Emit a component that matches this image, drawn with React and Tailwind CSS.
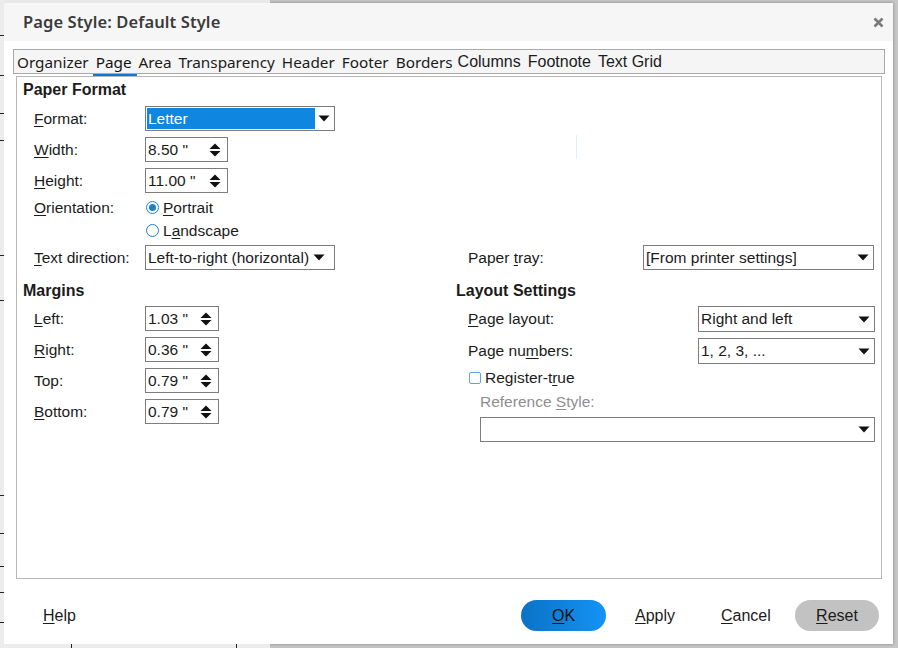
const sans = "font-['Liberation_Sans',Arial,sans-serif]"

function U({ text, at }) {
  // underline the mnemonic letter
  if (at === undefined || at < 0) return <span>{text}</span>
  return (
    <span className="whitespace-pre">
      {text.slice(0, at)}
      <span className="underline underline-offset-[2px] decoration-1">{text[at]}</span>
      {text.slice(at + 1)}
    </span>
  )
}

function DownArrow() {
  return (
    <svg width="12" height="7" viewBox="0 0 12 7" className="shrink-0">
      <path d="M0.5 0.5 L11.5 0.5 L6 6.5 Z" fill="#111" />
    </svg>
  )
}

function SpinArrows() {
  return (
    <svg width="12" height="16" viewBox="0 0 12 16" className="shrink-0">
      <path d="M0.5 7 L6 1.5 L11.5 7 Z" fill="#111" />
      <path d="M0.5 9 L11.5 9 L6 14.5 Z" fill="#111" />
    </svg>
  )
}

function Select({ value, className = '', selected = false, pr = 'pr-[4px]' }) {
  return (
    <div className={`flex items-center h-[25px] border border-[#7d7d7d] bg-white pl-[1px] ${pr} ${className}`}>
      <div className={`flex-1 h-[21px] flex items-center pl-[1px] ${selected ? 'bg-[#0f86e0] text-white mr-[3px]' : ''}`}>
        {value}
      </div>
      <DownArrow />
    </div>
  )
}

function Spin({ value, w = 'w-[83px]' }) {
  return (
    <div className={`flex items-center h-[25px] border border-[#7d7d7d] bg-white pl-[2px] pr-[6px] ${w}`}>
      <div className="flex-1">{value}</div>
      <SpinArrows />
    </div>
  )
}

function Label({ text, at, className = 'w-[111px]' }) {
  return (
    <span className={`shrink-0 ${className}`}>
      <U text={text} at={at} />
    </span>
  )
}

const margins = [
  { label: 'Left:', at: 0, value: '1.03 "' },
  { label: 'Right:', at: 0, value: '0.36 "' },
  { label: 'Top:', at: -1, value: '0.79 "' },
  { label: 'Bottom:', at: 0, value: '0.79 "' },
]

const tabsA = ['Organizer', 'Page', 'Area', 'Transparency', 'Header', 'Footer', 'Borders']
const tabsB = ['Columns', 'Footnote', 'Text Grid']

export default function App() {
  return (
    <div className={`relative w-[898px] h-[648px] overflow-hidden bg-[#c6c6c6] ${sans} text-[#1b1b1b]`}>
      {/* document behind the dialog */}
      <div className="absolute left-0 top-0 w-[270px] h-[3px] bg-[#e9e9e9]" />
      <div className="absolute left-0 top-0 w-[4px] h-[648px] bg-[#ececec]" />
      {[35, 75, 113, 140, 255, 300, 495, 533, 566, 592, 622].map((y) => (
        <div key={y} className="absolute left-0 w-[4px] h-px bg-[#222]" style={{ top: y }} />
      ))}
      <div className="absolute left-0 bottom-0 w-[270px] h-[4px] bg-[#ececec]" />
      <div className="absolute left-[71px] bottom-0 w-px h-[4px] bg-[#222]" />
      <div className="absolute left-[236px] bottom-0 w-px h-[4px] bg-[#222]" />

      <div className="pt-[3px] pl-[4px]">
        <div className="w-[889px] h-[641px] bg-white flex flex-col shadow-[0_0_3px_rgba(0,0,0,0.35)]">
          {/* title bar */}
          <div className="h-[38px] bg-[#f6f6f6] flex items-center justify-between pl-[19px] pr-[9px] shrink-0">
            <span className="font-['Noto_Sans',sans-serif] font-semibold text-[16.5px] text-[#3b3b3b] tracking-[0.1px] mt-[1px]">
              Page Style: Default Style
            </span>
            <svg width="11" height="11" viewBox="0 0 11 11">
              <path d="M1.5 1.5 L9.5 9.5 M9.5 1.5 L1.5 9.5" stroke="#7a7a7a" strokeWidth="2.6" />
            </svg>
          </div>

          {/* tabs */}
          <div className="mt-[8px] ml-[9px] w-[872px] h-[25px] border border-[#a9a9a9] bg-[#f5f5f5] flex items-center pl-[2px] gap-[5px]">
            {tabsA.map((t) => (
              <span
                key={t}
                className={`relative font-['Noto_Sans',sans-serif] text-[15.3px] px-[1px] mt-[1px] ${t === 'Page' ? 'text-[#111]' : ''}`}
              >
                {t}
                {t === 'Page' && <span className="absolute left-[-2px] right-[-4px] bottom-[-3px] h-[2px] bg-[#1577d3]" />}
              </span>
            ))}
            {tabsB.map((t, i) => (
              <span key={t} className={`text-[16px] px-[1px] mt-[1px] ${i === 0 ? 'ml-[-2px]' : ''}`}>{t}</span>
            ))}
          </div>

          {/* panel */}
          <div className="relative mt-[2px] ml-[12px] w-[866px] h-[503px] border border-[#b6b6b6] text-[15.5px] pt-[3px]">
            <div className="h-[20px] flex items-center pl-[6px] font-bold text-[16px]">Paper Format</div>

            <div className="pl-[17px] flex flex-col gap-[6px] mt-[6px]">
              <div className="flex items-center">
                <Label text="Format:" at={0} />
                <Select value="Letter" selected className="w-[190px]" />
              </div>
              <div className="flex items-center">
                <Label text="Width:" at={0} />
                <Spin value={'8.50 "'} />
              </div>
              <div className="flex items-center">
                <Label text="Height:" at={0} />
                <Spin value={'11.00 "'} />
              </div>
            </div>

            <div className="pl-[17px] mt-[3px]">
              <div className="flex items-center h-[23px]">
                <Label text="Orientation:" at={0} />
                <span className="w-[13px] h-[13px] rounded-full border border-[#1a7fd6] flex items-center justify-center mr-[4px] ml-[1px]">
                  <span className="w-[7px] h-[7px] rounded-full bg-[#1a7fd6]" />
                </span>
                <U text="Portrait" at={0} />
              </div>
              <div className="flex items-center h-[23px]">
                <span className="w-[111px] shrink-0" />
                <span className="w-[13px] h-[13px] rounded-full border border-[#1a7fd6] bg-white mr-[4px] ml-[1px]" />
                <U text="Landscape" at={1} />
              </div>
              <div className="flex items-center mt-[3px]">
                <Label text="Text direction:" at={0} />
                <Select value="Left-to-right (horizontal)" pr="pr-[9px]" className="w-[190px]" />
                <Label text="Paper tray:" at={6} className="ml-[133px] w-[175px]" />
                <Select value="[From printer settings]" className="w-[231px]" />
              </div>
            </div>

            <div className="flex mt-[11px] pr-[6px]">
              <div className="w-[439px] shrink-0">
                <div className="h-[20px] flex items-center pl-[6px] font-bold text-[16px]">Margins</div>
                <div className="pl-[17px] flex flex-col gap-[6px] mt-[5px]">
                  {margins.map((m) => (
                    <div key={m.label} className="flex items-center">
                      <Label text={m.label} at={m.at} />
                      <Spin value={m.value} w="w-[74px]" />
                    </div>
                  ))}
                </div>
              </div>
              <div className="flex-1">
                <div className="h-[20px] flex items-center font-bold text-[16px]">Layout Settings</div>
                <div className="pl-[12px] mt-[5px] flex flex-col">
                  <div className="flex items-center">
                    <Label text="Page layout:" at={0} className="w-[230px]" />
                    <Select value="Right and left" className="flex-1 h-[26px]" />
                  </div>
                  <div className="flex items-center mt-[6px]">
                    <Label text="Page numbers:" at={7} className="w-[230px]" />
                    <Select value="1, 2, 3, ..." className="flex-1 h-[26px]" />
                  </div>
                  <div className="flex items-center h-[20px] mt-[4px]">
                    <span className="w-[12px] h-[12px] rounded-[2px] border-[1.5px] border-[#5fa2de] bg-white mr-[4px] ml-[1px]" />
                    <U text="Register-true" at={10} />
                  </div>
                  <div className="flex items-center h-[20px] mt-[4px] pl-[12px] text-[#8e8e8e]">
                    <U text="Reference Style:" at={10} />
                  </div>
                  <div className="pl-[12px] mt-[5px]">
                    <Select value="" className="w-full" />
                  </div>
                </div>
              </div>
            </div>

            {/* faint page preview remnant */}
            <div className="absolute left-[559px] top-[58px] w-px h-[24px] bg-[#e2eefb]" />
          </div>

          {/* buttons */}
          <div className="flex items-center h-[31px] mt-[21px] text-[16px]">
            <span className="ml-[39px]">
              <U text="Help" at={0} />
            </span>
            <div className="flex-1" />
            <div className="w-[85px] h-[31px] rounded-full bg-gradient-to-r from-[#0a72c6] to-[#1493f5] flex items-center justify-center text-[#111]">
              <U text="OK" at={0} />
            </div>
            <span className="ml-[29px] w-[86px]">
              <U text="Apply" at={0} />
            </span>
            <span className="w-[74px]">
              <U text="Cancel" at={0} />
            </span>
            <div className="w-[84px] h-[31px] rounded-full bg-[#c2c2c2] flex items-center justify-center mr-[14px]">
              <U text="Reset" at={0} />
            </div>
          </div>
        </div>
      </div>
    </div>
  )
}
